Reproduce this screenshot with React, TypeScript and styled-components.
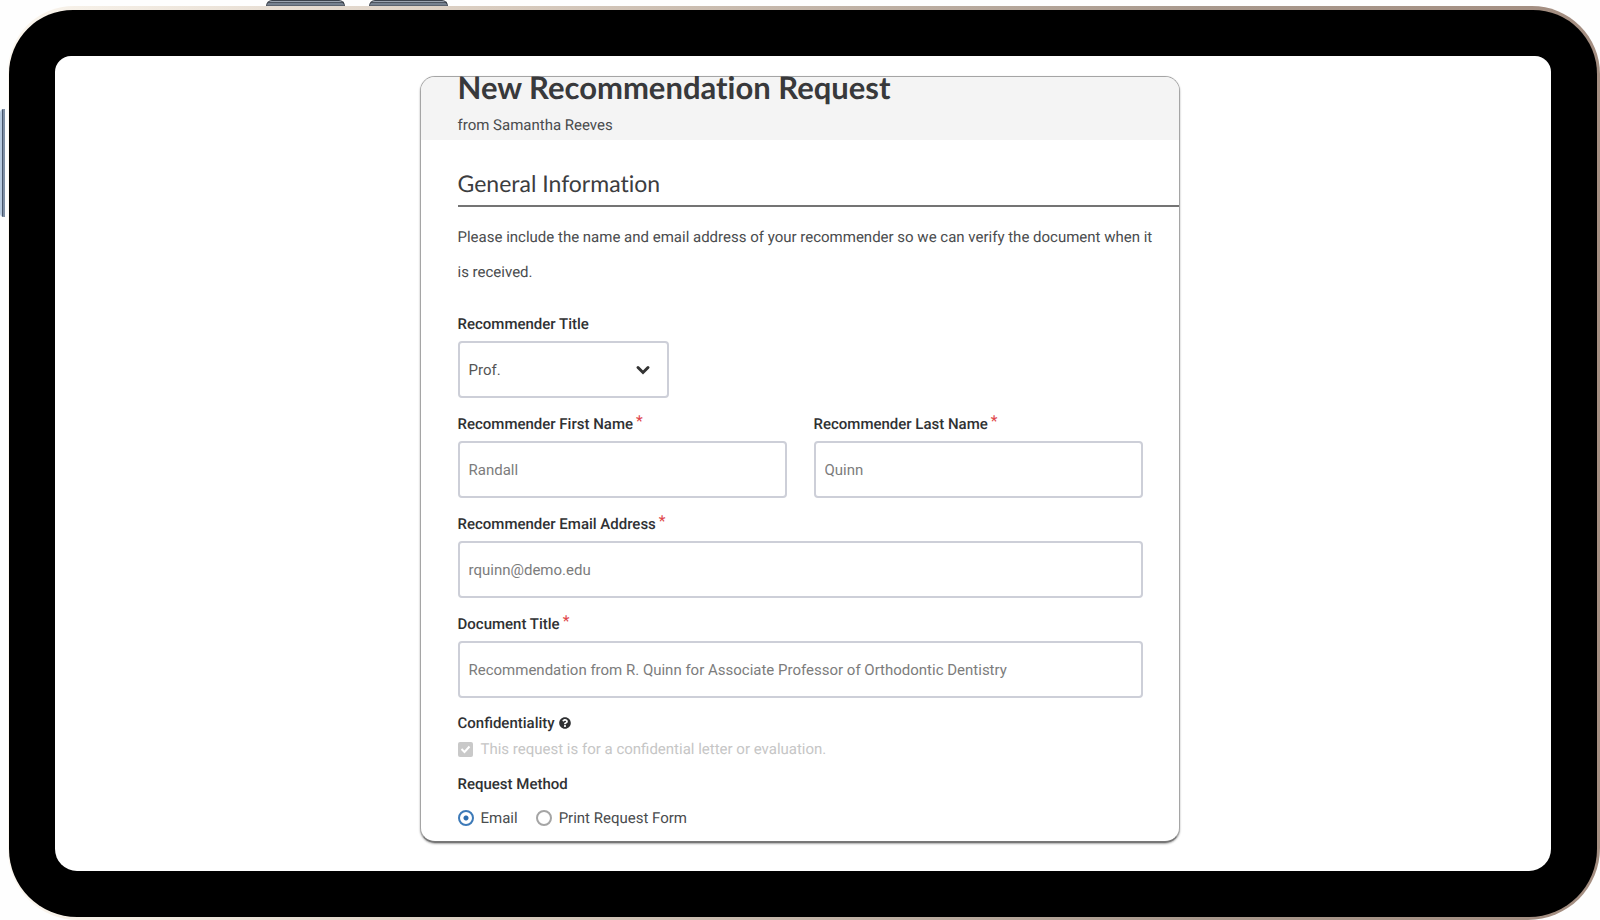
import React from "react";
import styled, { createGlobalStyle } from "styled-components";
import { FaQuestionCircle } from "react-icons/fa";

const GlobalStyle = createGlobalStyle`
  *, *::before, *::after { box-sizing: border-box; }
  body {
    margin: 0;
    background: #fefefe;
    color: #4a4c4e;
    font: 15px/20px Roboto, "Liberation Sans", sans-serif;
    text-rendering: geometricPrecision;
  }
  h1, h2, p, fieldset { margin: 0; padding: 0; border: 0; }
`;

const Page = styled.div`
  position: relative;
  display: flex;
  min-height: 100vh;
  padding: 6px 0 0 8px;
`;

const Rim = styled.div`
  flex: 1;
  display: flex;
  padding: 4px 3px 3px 1px;
  border-radius: 66px 68px 72px 70px;
  background: linear-gradient(to right, #fbf6ee 0%, #d9ccbf 30%, #a8988c 75%, #a38d80 100%);
`;

const Bezel = styled.div`
  flex: 1;
  display: flex;
  padding: 46px;
  border-radius: 64px 64px 68px 68px;
  background: #000;
`;

const Screen = styled.main`
  flex: 1;
  display: flex;
  justify-content: center;
  align-items: flex-start;
  padding: 20px 7px 26px 0;
  border-radius: 16px 16px 22px 22px;
  background: #fff;
`;

const TopButton = styled.span<{ $left: number }>`
  position: absolute;
  top: 0;
  left: ${(p) => p.$left}px;
  width: 79px;
  height: 6px;
  border: 1px solid #3c434d;
  border-bottom-color: #5b6470;
  border-radius: 6px 6px 0 0;
  background: linear-gradient(#9aa3af 0 1px, #4c545f 1px 2px, #76818f 2px);
`;

const SideButton = styled.span`
  position: absolute;
  top: 109px;
  left: 0;
  width: 5px;
  height: 108px;
  border-radius: 4px 0 0 4px;
  background: linear-gradient(to right, #b9cbe0 0 2px, #46546a 2px 3px, #7f8fa5 3px);
`;

const Card = styled.form`
  width: 100%;
  max-width: 760px;
  border: 1px solid #a5a5a5;
  border-bottom: 2px solid #777;
  border-radius: 15px;
  background: #fff;
  box-shadow: 0 1px 2px rgba(0, 0, 0, 0.35);
`;

const CardHeader = styled.header`
  display: flex;
  flex-direction: column;
  gap: 18px;
  padding: 0 37px 5px;
  border-radius: 14px 14px 0 0;
  background: #f4f4f4;
`;

const Title = styled.h1`
  font: 700 31px/20px Lato, sans-serif;
  font-variant-ligatures: none;
  color: #38393b;
`;

const Body = styled.div`
  padding: 27px 0 13px 37px;
`;

const SectionTitle = styled.h2`
  padding-bottom: 6px;
  border-bottom: 2px solid #747474;
  font: 400 23px/32px Lato, sans-serif;
  font-variant-ligatures: none;
  color: #3c3d3f;
`;

const Fields = styled.div`
  padding: 13px 36px 0 0;
`;

const Intro = styled.p`
  margin-right: -12px;
  line-height: 35px;
`;

const Row = styled.div`
  display: grid;
  grid-template-columns: 1fr 1fr;
  gap: 27px;
`;

const Field = styled.div<{ $first?: boolean }>`
  display: flex;
  flex-direction: column;
  gap: 7px;
  margin-top: ${(p) => (p.$first ? 24 : 16)}px;
`;

const Label = styled.label`
  font-weight: 500;
  color: #2f3133;
`;

const Required = styled.span`
  margin-left: 3px;
  vertical-align: 3px;
  line-height: 0;
  color: #e0454b;
`;

const Input = styled.input`
  width: 100%;
  height: 57px;
  padding: 0 9px;
  border: 2px solid #cdcfd8;
  border-radius: 4px;
  background: #fff;
  font: inherit;
  color: #7c7c7c;
`;

const SelectWrap = styled.div`
  position: relative;
  width: 211px;
`;

const Select = styled.select`
  display: block;
  width: 100%;
  height: 57px;
  padding: 0 9px;
  appearance: none;
  border: 2px solid #cdcfd8;
  border-radius: 4px;
  background: #fff;
  font: inherit;
  color: #555;
`;

const Chevron = styled.svg`
  position: absolute;
  top: 23px;
  right: 18px;
  pointer-events: none;
`;

const GroupLabel = styled.legend`
  display: flex;
  align-items: center;
  gap: 4px;
  padding: 0;
  font-weight: 500;
  color: #2f3133;
`;

const Group = styled.fieldset<{ $gap: number }>`
  margin-top: 15px;

  > div { margin-top: ${(p) => p.$gap}px; }
`;

const Options = styled.div`
  display: flex;
  gap: 18px;
`;

const Option = styled.label<{ $muted?: boolean }>`
  position: relative;
  display: flex;
  align-items: center;
  gap: 7px;
  color: ${(p) => (p.$muted ? "#c6c6c6" : "#4a4c4e")};
`;

const Checkbox = styled.input`
  width: 15px;
  height: 15px;
  margin: 0 1px 0 0;
  appearance: none;
  border-radius: 2px;
  background: #c9c9c9;
`;

const Tick = styled.svg`
  position: absolute;
  top: 5px;
  left: 2px;
`;

const Radio = styled.input`
  width: 16px;
  height: 16px;
  margin: 0;
  appearance: none;
  border: 2px solid #a5a5a5;
  border-radius: 50%;

  &:checked {
    border-color: #3d7ab8;
    background: radial-gradient(circle, #2c6cae 0 2px, #fff 3px);
  }
`;

type TextFieldProps = { id: string; label: string; value: string; type?: string };

function TextField({ id, label, value, type = "text" }: TextFieldProps) {
  return (
    <Field>
      <Label htmlFor={id}>
        {label}
        <Required>*</Required>
      </Label>
      <Input id={id} type={type} defaultValue={value} required />
    </Field>
  );
}

export default function App() {
  return (
    <Page>
      <GlobalStyle />
      <TopButton $left={266} />
      <TopButton $left={369} />
      <SideButton />
      <Rim>
        <Bezel>
          <Screen>
            <Card>
              <CardHeader>
                <Title>New Recommendation Request</Title>
                <p>from Samantha Reeves</p>
              </CardHeader>
              <Body>
                <SectionTitle>General Information</SectionTitle>
                <Fields>
                  <Intro>
                    Please include the name and email address of your recommender so we can verify
                    the document when it is received.
                  </Intro>
                  <Field $first>
                    <Label htmlFor="title">Recommender Title</Label>
                    <SelectWrap>
                      <Select id="title" defaultValue="Prof.">
                        <option>Prof.</option>
                        <option>Dr.</option>
                      </Select>
                      <Chevron width="16" height="12" viewBox="0 0 16 12" fill="none" aria-hidden="true">
                        <path d="M3 3.5 8 8.5 13 3.5" stroke="#333" strokeWidth="3" strokeLinecap="round" />
                      </Chevron>
                    </SelectWrap>
                  </Field>
                  <Row>
                    <TextField id="first" label="Recommender First Name" value="Randall" />
                    <TextField id="last" label="Recommender Last Name" value="Quinn" />
                  </Row>
                  <TextField id="email" type="email" label="Recommender Email Address" value="rquinn@demo.edu" />
                  <TextField
                    id="document"
                    label="Document Title"
                    value="Recommendation from R. Quinn for Associate Professor of Orthodontic Dentistry"
                  />
                  <Group $gap={6}>
                    <GroupLabel>
                      Confidentiality <FaQuestionCircle size={12} aria-hidden="true" />
                    </GroupLabel>
                    <Options>
                      <Option $muted>
                        <Checkbox type="checkbox" defaultChecked disabled />
                        <Tick width="11" height="10" viewBox="0 0 11 10" fill="none" aria-hidden="true">
                          <path d="M1.5 5 4.5 8 9.5 2.5" stroke="#fff" strokeWidth="2" />
                        </Tick>
                        This request is for a confidential letter or evaluation.
                      </Option>
                    </Options>
                  </Group>
                  <Group $gap={14}>
                    <GroupLabel>Request Method</GroupLabel>
                    <Options>
                      <Option>
                        <Radio type="radio" name="method" defaultChecked />
                        Email
                      </Option>
                      <Option>
                        <Radio type="radio" name="method" />
                        Print Request Form
                      </Option>
                    </Options>
                  </Group>
                </Fields>
              </Body>
            </Card>
          </Screen>
        </Bezel>
      </Rim>
    </Page>
  );
}
